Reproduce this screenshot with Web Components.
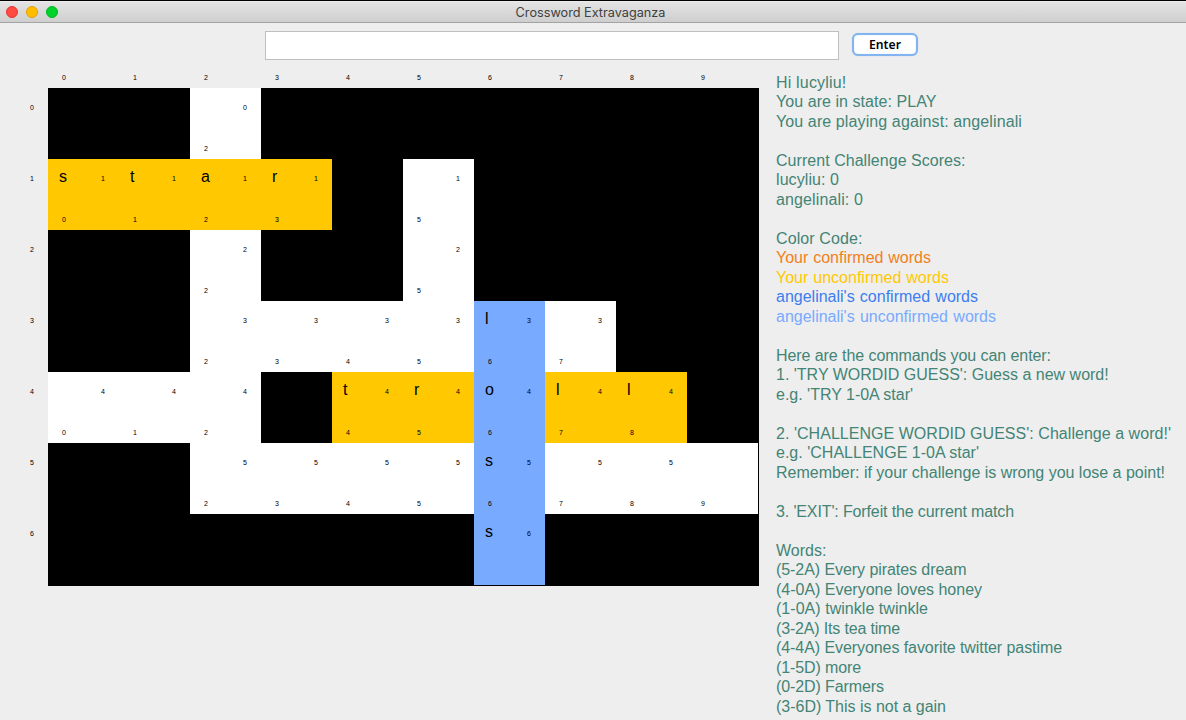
<!DOCTYPE html>
<html lang="en">
<head>
<meta charset="utf-8">
<title>Crossword Extravaganza</title>
<style>
  html, body { margin: 0; height: 100%; overflow: hidden; background: #eee; }
  body { font-family: "Liberation Sans", Arial, sans-serif; }
</style>
</head>
<body>
<crossword-app></crossword-app>
<script>
const define = (name, html, setup) => customElements.define(name, class extends HTMLElement {
  constructor() {
    super();
    this.attachShadow({ mode: 'open' }).innerHTML = html;
  }
  connectedCallback() { if (setup) setup(this, this.shadowRoot); }
});

define('title-bar', `
<style>
  :host { display: grid; grid-template-columns: 1fr auto 1fr; align-items: center; height: 21px; flex: none;
    border-top: 1px solid #000; border-bottom: 1px solid #a3a3a3; box-sizing: content-box;
    background: linear-gradient(#f4f4f4 0, #e4e4e4 1px, #cecece 100%); }
  .lights { display: flex; gap: 8px; padding-left: 6px; }
  i { width: 12px; height: 12px; border-radius: 50%; box-sizing: border-box; }
  .c { background: #ff4a42; border: 1px solid #e8332e; }
  .m { background: #ffbd00; border: 1px solid #e2a100; }
  .z { background: #00d32c; border: 1px solid #00b51d; }
  .t { font: 400 12.7px/20px Inter, sans-serif; color: #404040; padding: 2px 5px 0 0; }
</style>
<div class="lights"><i class="c"></i><i class="m"></i><i class="z"></i></div>
<div class="t"><slot></slot></div><div></div>`);

define('command-bar', `
<style>
  :host { display: flex; align-items: flex-start; gap: 13px; padding: 8px 0 0 265px; height: 44px; box-sizing: border-box; flex: none; }
  input { width: 574px; height: 29px; box-sizing: border-box; border: 1px solid #bfbfbf; background: #fff; margin: 0; padding: 0 6px; outline: 0; border-radius: 0; font: 16px "Liberation Sans", sans-serif; }
  button { margin: 2px 0 0; width: 66px; height: 23px; box-sizing: border-box; border: 2px solid #82b4ef; border-radius: 6px; background: #fff; padding: 0; font: 600 12.2px/18px "Noto Sans", sans-serif; color: #000; box-shadow: inset 0 0 1px #9cc3f2, 0 0 1px #a9c9f0; }
</style>
<input aria-label="Command"><button><slot></slot></button>`);

define('board-cell', `
<style>
  :host { display: grid; grid-template-columns: 11px 1fr 16px; grid-template-rows: 38px 1fr; background: #000; color: #000; }
  :host([kind="open"]) { background: #fff; }
  :host([kind="mine"]) { background: #ffc800; }
  :host([kind="theirs"]) { background: #78aaff; }
  .l { grid-column: 2; font-size: 16px; line-height: 18px; padding-top: 9px; }
  .r, .c { font-size: 7px; line-height: 8px; color: #000; }
  .r { grid-column: 3; grid-row: 1; padding-top: 16px; margin-left: -2px; }
  .c { grid-column: 2 / 4; grid-row: 2; padding: 19px 0 0 3px; }
</style>
<span class="l"></span><span class="r"></span><span class="c"></span>`, (el, root) => {
  for (const [cls, attr] of [['.l', 'letter'], ['.r', 'row'], ['.c', 'col']])
    root.querySelector(cls).textContent = el.getAttribute(attr) || '';
});

define('cross-board', `
<style>
  :host { display: grid; grid-template-columns: 48px 711px; grid-template-rows: 21px 498px; color: #000; font-size: 7px; line-height: 8px; }
  .cols { grid-column: 2; display: grid; grid-template-columns: repeat(10, 71px); padding-top: 7px; }
  .cols span { padding-left: 14px; }
  .rows { display: grid; grid-template-rows: repeat(7, 71px); }
  .rows span { padding: 16px 0 0 30px; }
  .cells { display: grid; grid-template-columns: repeat(10, 71px); grid-template-rows: repeat(7, 71px); background: #000; }
</style>
<div class="cols"></div><div class="rows"></div><div class="cells"></div>`, (el, root) => {
  const layout = [
    '. . w . . . . . . .',
    'ms mt ma mr . w . . . .',
    '. . w . . w . . . .',
    '. . w w w w tl w . .',
    'w w w . mt mr to ml ml .',
    '. . w w w w ts w w w',
    '. . . . . . ts . . .'
  ];
  const kinds = { w: 'open', m: 'mine', t: 'theirs' };
  const label = n => `<span>${n}</span>`;
  root.querySelector('.cols').innerHTML = [...Array(10).keys()].map(label).join('');
  root.querySelector('.rows').innerHTML = [...Array(7).keys()].map(label).join('');
  root.querySelector('.cells').innerHTML = layout.map((line, r) => line.split(' ').map((s, c) => {
    if (s === '.') return '<board-cell></board-cell>';
    /* the outermost column and row carry no index label */
    const row = c < 9 ? `row="${r}"` : '', col = r < 6 ? `col="${c}"` : '';
    return `<board-cell kind="${kinds[s[0]]}" letter="${s.slice(1)}" ${row} ${col}></board-cell>`;
  }).join('')).join('');
});

define('info-line', `
<style>
  :host { display: block; height: 19.5px; line-height: 19.5px; white-space: nowrap; color: #438475; }
  :host([tone="orange"]) { color: #f28020; }
  :host([tone="yellow"]) { color: #ffc800; }
  :host([tone="blue"]) { color: #3c7df0; }
  :host([tone="sky"]) { color: #78aaff; }
  span { display: inline-block; }
</style><span><slot></slot></span>`, (el, root) => {
  /* justify the line to its measured width; word gaps only where an fi ligature must survive */
  const width = +el.getAttribute('width'), text = el.textContent;
  if (!width) return;
  const span = root.querySelector('span');
  const slack = width - span.getBoundingClientRect().width;
  if (text.includes('fi')) span.style.wordSpacing = slack / (text.split(' ').length - 1) + 'px';
  else span.style.letterSpacing = slack / text.length + 'px';
});

define('info-panel', `
<style>:host { display: block; font-size: 16px; padding: 5.7px 0 0 17px; }</style><slot></slot>`);

define('crossword-app', `
<style>
  :host { display: flex; flex-direction: column; width: 1186px; height: 720px; overflow: hidden; background: #eee; }
  main { display: flex; align-items: flex-start; }
  cross-board, info-panel { flex: none; }
</style>
<title-bar>Crossword Extravaganza</title-bar>
<command-bar>Enter</command-bar>
<main><cross-board></cross-board><info-panel></info-panel></main>`, (el, root) => {
  const lines = [
    ['Hi lucyliu!', 70.5], ['You are in state: PLAY', 160.5], ['You are playing against: angelinali', 246], [''],
    ['Current Challenge Scores:', 189.6], ['lucyliu: 0', 63], ['angelinali: 0', 87], [''],
    ['Color Code:', 86.5], ['Your confirmed words', 155, 'orange'], ['Your unconfirmed words', 173, 'yellow'],
    ["angelinali's confirmed words", 202, 'blue'], ["angelinali's unconfirmed words", 220, 'sky'], [''],
    ['Here are the commands you can enter:', 275], ["1. 'TRY WORDID GUESS': Guess a new word!", 332.7], ["e.g. 'TRY 1-0A star'", 137], [''],
    ["2. 'CHALLENGE WORDID GUESS': Challenge a word!'", 395], ["e.g. 'CHALLENGE 1-0A star'", 203],
    ['Remember: if your challenge is wrong you lose a point!', 389], [''],
    ["3. 'EXIT': Forfeit the current match", 238], [''], ['Words:', 50.5],
    ['(5-2A) Every pirates dream', 190.4], ['(4-0A) Everyone loves honey', 206], ['(1-0A) twinkle twinkle', 152], ['(3-2A) Its tea time', 124],
    ['(4-4A) Everyones favorite twitter pastime', 286], ['(1-5D) more', 85], ['(0-2D) Farmers', 108], ['(3-6D) This is not a gain', 170]
  ];
  const panel = root.querySelector('info-panel');
  for (const [text, width, tone] of lines) {
    const line = document.createElement('info-line');
    line.textContent = text;
    if (width) line.setAttribute('width', width);
    if (tone) line.setAttribute('tone', tone);
    panel.append(line);
  }
});
</script>
</body>
</html>
